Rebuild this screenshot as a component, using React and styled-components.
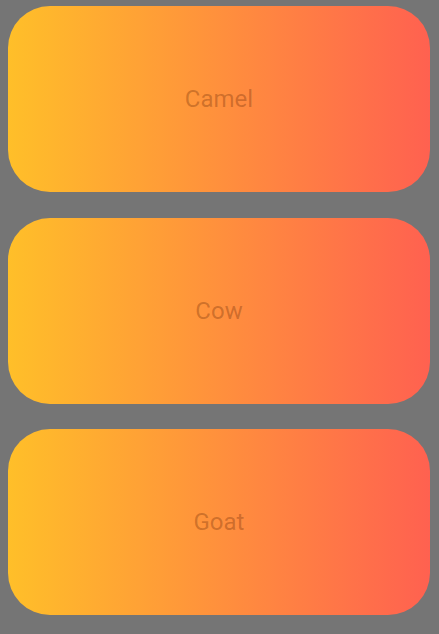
import React from 'react'
import styled, { createGlobalStyle } from 'styled-components'

const GlobalStyle = createGlobalStyle`
  html, body {
    margin: 0;
    background: #757575;
    font-family: Roboto, "Liberation Sans", sans-serif;
  }
`;

const animals = ['Camel', 'Cow', 'Goat'];

const App = () => {
  return (
    <>
      <GlobalStyle />
      <List>
        {animals.map((name) => (
          <Card key={name}>
            <Label>{name}</Label>
          </Card>
        ))}
      </List>
    </>
  )
}

const List = styled.div`
  display: flex;
  flex-direction: column;
  gap: 25.5px;
  padding: 6px 9px 8px 8px;
`;

const Card = styled.div`
  height: 186px;
  border-radius: 42px;
  background: linear-gradient(to right, #ffbf29, #ff6150);
  display: flex;
  align-items: center;
  justify-content: center;
`;

const Label = styled.span`
  font-size: 24px;
  color: rgba(90, 30, 0, 0.3);
`;

export default App
